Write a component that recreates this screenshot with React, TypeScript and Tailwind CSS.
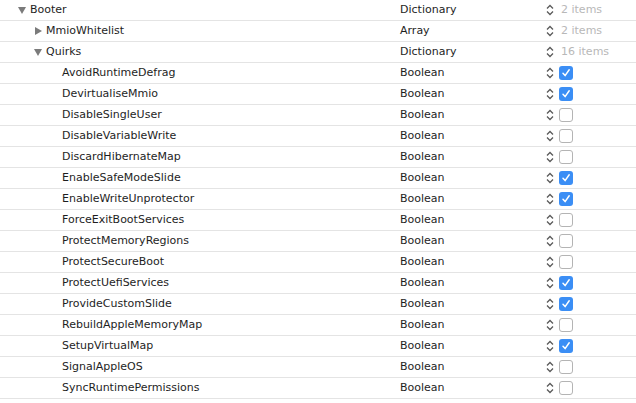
import React from 'react'

type Row = {
  key: string
  type: string
  depth: 0 | 1 | 2
  toggle?: 'open' | 'closed'
  items?: string
  checked?: boolean
}

const rows: Row[] = [
  { key: 'Booter', type: 'Dictionary', depth: 0, toggle: 'open', items: '2 items' },
  { key: 'MmioWhitelist', type: 'Array', depth: 1, toggle: 'closed', items: '2 items' },
  { key: 'Quirks', type: 'Dictionary', depth: 1, toggle: 'open', items: '16 items' },
  { key: 'AvoidRuntimeDefrag', type: 'Boolean', depth: 2, checked: true },
  { key: 'DevirtualiseMmio', type: 'Boolean', depth: 2, checked: true },
  { key: 'DisableSingleUser', type: 'Boolean', depth: 2, checked: false },
  { key: 'DisableVariableWrite', type: 'Boolean', depth: 2, checked: false },
  { key: 'DiscardHibernateMap', type: 'Boolean', depth: 2, checked: false },
  { key: 'EnableSafeModeSlide', type: 'Boolean', depth: 2, checked: true },
  { key: 'EnableWriteUnprotector', type: 'Boolean', depth: 2, checked: true },
  { key: 'ForceExitBootServices', type: 'Boolean', depth: 2, checked: false },
  { key: 'ProtectMemoryRegions', type: 'Boolean', depth: 2, checked: false },
  { key: 'ProtectSecureBoot', type: 'Boolean', depth: 2, checked: false },
  { key: 'ProtectUefiServices', type: 'Boolean', depth: 2, checked: true },
  { key: 'ProvideCustomSlide', type: 'Boolean', depth: 2, checked: true },
  { key: 'RebuildAppleMemoryMap', type: 'Boolean', depth: 2, checked: false },
  { key: 'SetupVirtualMap', type: 'Boolean', depth: 2, checked: true },
  { key: 'SignalAppleOS', type: 'Boolean', depth: 2, checked: false },
  { key: 'SyncRuntimePermissions', type: 'Boolean', depth: 2, checked: false },
]

// petites flèches haut/bas du sélecteur
function Stepper() {
  return (
    <svg width="8" height="12" viewBox="0 0 8 12" className="shrink-0">
      <path d="M1 4.5 L4 1.5 L7 4.5" fill="none" stroke="#5a5a5a" strokeWidth="1.3" />
      <path d="M1 7.5 L4 10.5 L7 7.5" fill="none" stroke="#5a5a5a" strokeWidth="1.3" />
    </svg>
  )
}

function Checkbox({ checked }: { checked: boolean }) {
  if (checked) {
    return (
      <div className="w-[14px] h-[14px] rounded-[3px] bg-[#3b8ef5] flex items-center justify-center">
        <svg width="10" height="10" viewBox="0 0 10 10">
          <path d="M2 5.3 L4.1 7.6 L8.2 1.8" fill="none" stroke="white" strokeWidth="1.5" strokeLinecap="round" strokeLinejoin="round" />
        </svg>
      </div>
    )
  }
  return <div className="w-[14px] h-[14px] rounded-[3px] border border-[#b4b4b4] bg-white" />
}

function Toggle({ open }: { open: boolean }) {
  return (
    <svg width="8" height="8" viewBox="0 0 8 8" className="shrink-0">
      {open ? <path d="M0 1 L8 1 L4 8 Z" fill="#7b7b7b" /> : <path d="M1 0 L8 4 L1 8 Z" fill="#7b7b7b" />}
    </svg>
  )
}

export default function App() {
  return (
    <div
      className="w-[636px] h-[403px] bg-white overflow-hidden text-[11px] text-[#1e1e1e]"
      style={{ fontFamily: '"DejaVu Sans", sans-serif' }}
    >
      {rows.map((r, i) => (
        <div key={i} className="flex items-center h-[21px] border-b border-[#e4e4e4]">
          <div
            className={
              'w-[400px] flex items-center gap-[4px] ' +
              (r.depth === 0 ? 'pl-[18px]' : r.depth === 1 ? 'pl-[34px]' : 'pl-[62px]')
            }
          >
            {r.toggle && <Toggle open={r.toggle === 'open'} />}
            <span className="pt-px">{r.key}</span>
          </div>
          <div className="w-[146px] pt-px">{r.type}</div>
          <div className="flex items-center gap-[5px]">
            <Stepper />
            {r.items ? (
              <span className="pl-[2px] pt-px text-[#b8b8b8]">{r.items}</span>
            ) : (
              <Checkbox checked={!!r.checked} />
            )}
          </div>
        </div>
      ))}
    </div>
  )
}
